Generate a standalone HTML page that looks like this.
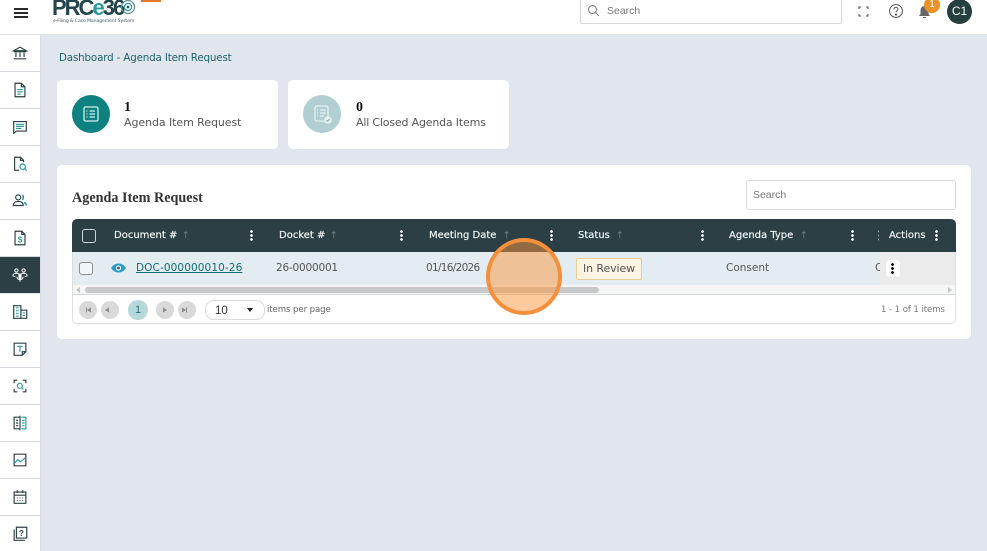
<!DOCTYPE html>
<html><head><meta charset="utf-8">
<style>
html,body{margin:0;padding:0}
body{width:987px;height:551px;overflow:hidden;background:#e1e6ee;position:relative;font-family:"DejaVu Sans","Liberation Sans",sans-serif;color:#444}
div,span,svg{position:absolute;box-sizing:border-box}
.t{white-space:nowrap;line-height:14px}
.side{left:0;width:40px;height:37px;background:#fff;border-bottom:1px solid #d5d9de}
.side svg{left:11px;top:9px;width:18px;height:18px;fill:none;stroke:#2b4146;stroke-width:1.3}
.th{color:#eef2f2;font-size:10px;top:229px;-webkit-text-stroke:.2px #eef2f2}
.arr{color:#6f8487;font-size:9px;top:229px}
.dots{width:3px;height:11px;top:230px;background:radial-gradient(circle at 1.5px 1.5px,#eef 1.3px,transparent 1.5px) 0 0/3px 4px}
.card{background:#fff;border-radius:5px}
.pg{width:18px;height:18px;border-radius:50%;background:#d9d9d9;top:301px}
</style></head><body>

<!-- top bar -->
<div style="left:0;top:0;width:987px;height:35px;background:#fff;border-bottom:1px solid #dfe2e6"></div>
<div style="left:14px;top:8px;width:14px;height:2px;background:#2a2a2a"></div>
<div style="left:14px;top:12px;width:14px;height:2px;background:#2a2a2a"></div>
<div style="left:14px;top:16px;width:14px;height:2px;background:#2a2a2a"></div>

<!-- logo -->
<div class="t" style="left:52px;top:-3px;font:bold 22px/22px 'Liberation Sans',sans-serif;color:#24454c;letter-spacing:-2px">PRC<span style="position:static;color:#2b9a9c">e</span>36</div>
<svg style="left:121px;top:-1px;width:15px;height:18px" viewBox="0 0 15 18"><circle cx="7" cy="8" r="6.500" fill="none" stroke="#5b8d92" stroke-width="1.200"/><circle cx="7" cy="8" r="3.600" fill="none" stroke="#2b9a9c" stroke-width="1.200"/><circle cx="7" cy="8" r="1.300" fill="#24454c"/></svg>
<div class="t" style="left:53px;top:18px;font-size:4.600px;line-height:7px;color:#3d5a60;letter-spacing:-.1px">e-Filing &amp; Case Management System</div>
<div style="left:141px;top:0;width:20px;height:2px;background:#e57a2c"></div>

<!-- top search -->
<div style="left:580px;top:-2px;width:262px;height:26px;background:#fff;border:1px solid #d6d8db;border-radius:2px"></div>
<svg style="left:587px;top:4px;width:13px;height:13px" viewBox="0 0 13 13" fill="none" stroke="#777" stroke-width="1"><circle cx="5.500" cy="5.500" r="4"/><path d="M8.500 8.500L12 12"/></svg>
<div class="t" style="left:607px;top:4px;font:10.500px/14px 'Liberation Sans',sans-serif;color:#777">Search</div>

<svg style="left:857px;top:5px;width:13px;height:13px" viewBox="0 0 13 13" fill="none" stroke="#555" stroke-width="1.100"><path d="M2 4V2h2M9 2h2v2M11 9v2H9M4 11H2V9"/></svg>
<svg style="left:888px;top:3px;width:16px;height:16px" viewBox="0 0 16 16" fill="none" stroke="#555" stroke-width="1"><circle cx="8" cy="8" r="6.400"/><path d="M6 6.400C6 5 7 4.400 8 4.400s2 .7 2 1.800c0 1.400-2 1.600-2 3.200"/><circle cx="8" cy="11.600" r=".6" fill="#555"/></svg>
<svg style="left:918px;top:5px;width:13px;height:14px" viewBox="0 0 13 14"><path d="M6.500 1C4 1 2.500 3 2.500 5.500V9L1 11h11l-1.500-2V5.500C10.500 3 9 1 6.500 1z" fill="#666"/><path d="M5 12.500h3" stroke="#666"/></svg>
<div style="left:924px;top:-3px;width:16px;height:16px;border-radius:50%;background:#ed9027;color:#fff;font:10px/16px 'Liberation Sans',sans-serif;text-align:center">1</div>
<div style="left:947px;top:-1px;width:25px;height:25px;border-radius:50%;background:#25403f;color:#fff;font:12px/25px 'Liberation Sans',sans-serif;text-align:center">C1</div>

<!-- sidebar -->
<div style="left:40px;top:35px;width:1px;height:516px;background:#d8dde4"></div>
<div class="side" style="top:35px"><svg viewBox="0 0 20 20"><path d="M3 7.500L10 3.500l7 4zM3 8.500h14M5.500 9.500v5M10 9.500v5M14.500 9.500v5M3 16.500h14"/></svg></div>
<div class="side" style="top:72px"><svg viewBox="0 0 20 20"><path d="M4.500 2.500h7l4 4v11h-11zM11.500 2.500v4h4"/><path d="M7 9.500h6M7 12h6M7 14.500h4" stroke="#2b9a9c"/></svg></div>
<div class="side" style="top:109px"><svg viewBox="0 0 20 20"><path d="M3 4h14v10.500H6L3 17z"/><path d="M5.500 7h9M5.500 9.300h9M5.500 11.600h6" stroke="#2b9a9c"/></svg></div>
<div class="side" style="top:146px"><svg viewBox="0 0 20 20"><path d="M9 17H4V2.500h6.500l3.500 3.500v2"/><path d="M10.500 2.500V6H14"/><circle cx="13" cy="13" r="3" stroke="#2b9a9c"/><path d="M15.200 15.200L17.500 17.500" stroke="#2b9a9c"/></svg></div>
<div class="side" style="top:183px"><svg viewBox="0 0 20 20"><circle cx="8" cy="6" r="2.800"/><path d="M2.500 15c0-3 2.500-4.500 5.500-4.500s5 1 5.500 3.500v1z"/><path d="M12.500 3.500c1.500.5 1.500 4.500 0 5M14.500 11.500c1.500.5 2.500 2 2.500 3.500" stroke="#2b9a9c" stroke-width="1.800"/></svg></div>
<div class="side" style="top:220px"><svg viewBox="0 0 20 20"><path d="M4.500 2.500h7.500l3.500 3.500v11.500h-11zM12 2.500V6h3.500"/><text x="10" y="15" font-size="9" font-weight="bold" text-anchor="middle" fill="#2b9a9c" stroke="none" font-family="Liberation Sans">$</text></svg></div>
<div class="side" style="top:257px;background:#2b3f44;border:0;height:36px"><svg viewBox="0 0 20 20" style="stroke:#fff;stroke-width:1.100"><circle cx="6" cy="5" r="1.800"/><circle cx="14" cy="5" r="1.800"/><path d="M2 11c0-2 2-3 4-3s3 1 3 1M18 11c0-2-2-3-4-3s-3 1-3 1"/><path d="M2 11l3 1M18 11l-3 1"/><rect x="8.800" y="9" width="2.400" height="5" rx="1.200" fill="#fff"/><path d="M6.500 12c0 4 7 4 7 0M10 15.500v2"/></svg></div>
<div class="side" style="top:294px"><svg viewBox="0 0 20 20"><path d="M3 17V3h8v14zM11 8h6.500v9H3"/><path d="M5.500 5.500h3M5.500 8.500h3M5.500 11.500h3M5.500 14.500h3M13 11h2.500M13 14h2.500" stroke="#2b9a9c"/></svg></div>
<div class="side" style="top:331px"><svg viewBox="0 0 20 20"><path d="M3.500 3.500h13v9.500l-4 4h-9zM16.500 13h-4v4"/><path d="M7 7h6M10 7v6" stroke="#2b9a9c"/></svg></div>
<div class="side" style="top:368px"><svg viewBox="0 0 20 20"><path d="M3.500 7V3.500H7M13 3.500h3.500V7M16.500 13v3.500H13M7 16.500H3.500V13"/><circle cx="9.800" cy="9.800" r="2.800" stroke="#2b9a9c"/><path d="M12 12l1.800 1.800" stroke="#2b9a9c"/></svg></div>
<div class="side" style="top:405px"><svg viewBox="0 0 20 20"><path d="M10 3.500H3.500v13H10M10 2v16"/><path d="M5.500 7H8M5.500 10H8M5.500 13H8"/><path d="M11.500 3.500h5v13h-5M12.500 7H15M12.500 10H15M12.500 13H15" stroke="#2b9a9c"/></svg></div>
<div class="side" style="top:442px"><svg viewBox="0 0 20 20"><path d="M3.500 3.500h13v13h-13z"/><path d="M3.500 14l4-4.500 3 2.500 6-5" stroke="#2b9a9c"/></svg></div>
<div class="side" style="top:479px"><svg viewBox="0 0 20 20"><path d="M3.500 4.500h13v12.500h-13zM3.500 8h13M7 2.500v3M13 2.500v3"/><path d="M6.500 11h1M9.500 11h1M12.500 11h1M6.500 14h1M9.500 14h1M12.500 14h1"/></svg></div>
<div class="side" style="top:516px;height:35px;border:0"><svg viewBox="0 0 20 20"><path d="M6 2.500h11.500v12H6zM3.500 5v12h12"/><text x="11.700" y="12" font-size="9" font-weight="bold" text-anchor="middle" fill="#2b4146" stroke="none" font-family="Liberation Sans">?</text></svg></div>

<!-- breadcrumb -->
<div class="t" style="left:59px;top:51px;font-size:10.300px;color:#1d6469;letter-spacing:-.15px">Dashboard - Agenda Item Request</div>

<!-- stat cards -->
<div class="card" style="left:57px;top:80px;width:221px;height:69px"></div>
<div style="left:72px;top:95px;width:38px;height:38px;border-radius:50%;background:#0d8080"></div>
<svg style="left:81px;top:104px;width:20px;height:20px" viewBox="0 0 20 20" fill="none" stroke="#d5efef" stroke-width="1.300"><rect x="3" y="3" width="14" height="14" rx="1.500"/><path d="M8.500 7H14M8.500 10H14M8.500 13H14M5.500 7h1M5.500 10h1M5.500 13h1"/></svg>
<div class="t" style="left:124px;top:101px;font:bold 14px/14px 'Liberation Serif',serif;color:#111">1</div>
<div class="t" style="left:124px;top:116px;font-size:11px;color:#555;letter-spacing:-.07px">Agenda Item Request</div>

<div class="card" style="left:288px;top:80px;width:221px;height:69px"></div>
<div style="left:303px;top:95px;width:38px;height:38px;border-radius:50%;background:#b1cfd2"></div>
<svg style="left:312px;top:104px;width:22px;height:22px" viewBox="0 0 22 22" fill="none" stroke="#e4f0f1" stroke-width="1.200"><rect x="3" y="2" width="13" height="15" rx="1.500"/><path d="M8 6h6M8 9h6M8 12h4M5 6h1M5 9h1M5 12h1"/><circle cx="16" cy="16" r="3.800" fill="#e4f0f1" stroke="none"/><path d="M14.300 16l1.200 1.200 2.200-2.200" stroke="#8fb5b9"/></svg>
<div class="t" style="left:356px;top:101px;font:bold 14px/14px 'Liberation Serif',serif;color:#111">0</div>
<div class="t" style="left:356px;top:116px;font-size:11px;color:#555;letter-spacing:-.18px">All Closed Agenda Items</div>

<!-- main card -->
<div class="card" style="left:57px;top:165px;width:914px;height:174px"></div>
<div class="t" style="left:72px;top:190px;font:bold 14.200px/16px 'Liberation Serif',serif;color:#333">Agenda Item Request</div>
<div style="left:746px;top:180px;width:210px;height:30px;border:1px solid #d9dcdf;border-radius:3px;background:#fff"></div>
<div class="t" style="left:753px;top:188px;font:10.500px/14px 'Liberation Sans',sans-serif;color:#777">Search</div>

<!-- grid -->
<div style="left:72px;top:219px;width:884px;height:105px;border:1px solid #dcdfe2;border-radius:5px;background:#fff"></div>
<div style="left:72px;top:219px;width:884px;height:33px;background:#2b3f44;border-radius:5px 5px 0 0"></div>
<div style="left:82px;top:229px;width:14px;height:14px;border:1px solid #cfd6d8;border-radius:3px"></div>

<div class="t th" style="left:114px">Document #</div><div class="t arr" style="left:182px">↑</div><div class="dots" style="left:250px"></div>
<div class="t th" style="left:279px">Docket #</div><div class="t arr" style="left:330px">↑</div><div class="dots" style="left:400px"></div>
<div class="t th" style="left:429px">Meeting Date</div><div class="t arr" style="left:503px">↑</div><div class="dots" style="left:550px"></div>
<div class="t th" style="left:578px">Status</div><div class="t arr" style="left:616px">↑</div><div class="dots" style="left:701px"></div>
<div class="t th" style="left:729px">Agenda Type</div><div class="t arr" style="left:800px">↑</div><div class="dots" style="left:851px"></div>
<div class="dots" style="left:878px;width:1px;opacity:.6"></div>
<div class="t th" style="left:889px">Actions</div><div class="dots" style="left:935px"></div>

<!-- row -->
<div style="left:73px;top:252px;width:882px;height:33px;background:#e3ecf0"></div>
<div style="left:880px;top:252px;width:75px;height:33px;background:#ebebeb"></div>
<div style="left:79px;top:262px;width:14px;height:13px;border:1px solid #8a8f92;border-radius:3px;background:#f1f5f7"></div>
<svg style="left:110px;top:262px;width:17px;height:12px" viewBox="0 0 17 12"><path d="M1 6c2-3 4.500-4.500 7.500-4.500S14 3 16 6c-2 3-4.500 4.500-7.500 4.500S3 9 1 6z" fill="#2b9ac9"/><circle cx="8.500" cy="6" r="2.600" fill="#fff"/><circle cx="8.500" cy="6" r="1.500" fill="#1f6f90"/></svg>
<div class="t" style="left:136px;top:261px;font-size:10.500px;color:#0f6e74;text-decoration:underline;letter-spacing:.1px">DOC-000000010-26</div>
<div class="t" style="left:276px;top:261px;font-size:10.500px;color:#555;letter-spacing:-.2px">26-0000001</div>
<div class="t" style="left:426px;top:261px;font-size:10.500px;color:#555;letter-spacing:-.7px">01/16/2026</div>
<div style="left:576px;top:258px;width:66px;height:22px;background:#fdf3e2;border:1px solid #f0cd92;border-radius:2px"></div>
<div class="t" style="left:583px;top:262px;font-size:11px;color:#555;letter-spacing:-.1px">In Review</div>
<div class="t" style="left:726px;top:261px;font-size:10.500px;color:#555">Consent</div>
<div class="t" style="left:875px;top:261px;width:5px;overflow:hidden;font-size:10.500px;color:#555">C</div>
<div style="left:886px;top:260px;width:14px;height:17px;background:#fff;border-radius:3px"></div>
<div style="left:891px;top:263px;width:3px;height:11px;background:radial-gradient(circle at 1.500px 1.500px,#111 1.300px,transparent 1.500px) 0 0/3px 4px"></div>

<!-- scrollbar -->
<div style="left:73px;top:285px;width:882px;height:10px;background:#f4f5f5;border-bottom:1px solid #d4d6d8"></div>
<div style="left:85px;top:287px;width:514px;height:6px;border-radius:3px;background:#c6c8c9"></div>
<div style="left:76px;top:287px;border:3px solid transparent;border-right:4px solid #c4c4c4;border-left:0"></div>
<div style="left:948px;top:287px;border:3px solid transparent;border-left:4px solid #c4c4c4;border-right:0"></div>

<!-- pager -->
<div class="pg" style="left:79px"></div><div class="pg" style="left:101px"></div>
<div class="pg" style="left:156px"></div><div class="pg" style="left:178px"></div>
<div style="left:128px;top:300px;width:20px;height:20px;border-radius:50%;background:#b7d8db;color:#2f6e73;font:11px/20px 'Liberation Sans',sans-serif;text-align:center">1</div>
<svg style="left:79px;top:301px;width:117px;height:18px" viewBox="0 0 117 18" fill="#8a8a8a"><path d="M7 6.500v5h1v-5zM12 6.500v5L8 9zM30 6.500v5L26 9zM84 6.500v5L88 9zM103 6.500v5L107 9zM107 6.500v5h1v-5z"/></svg>
<div style="left:205px;top:300px;width:60px;height:20px;border:1px solid #d9dcdf;border-radius:9px"></div>
<div class="t" style="left:215px;top:304px;font:11.500px/14px 'Liberation Sans',sans-serif;color:#333">10</div>
<div style="left:247px;top:308px;border:3.500px solid transparent;border-top:4px solid #222;border-bottom:0"></div>
<div class="t" style="left:267px;top:303px;font-size:8.600px;color:#666;letter-spacing:-.1px">items per page</div>
<div class="t" style="left:881px;top:303px;font-size:8.500px;color:#777;letter-spacing:-.05px">1 - 1 of 1 items</div>

<!-- click highlight -->
<div style="left:486px;top:238px;width:76px;height:77px;border-radius:50%;background:rgba(251,150,61,.5);border:4px solid #f58f3c"></div>
</body></html>
